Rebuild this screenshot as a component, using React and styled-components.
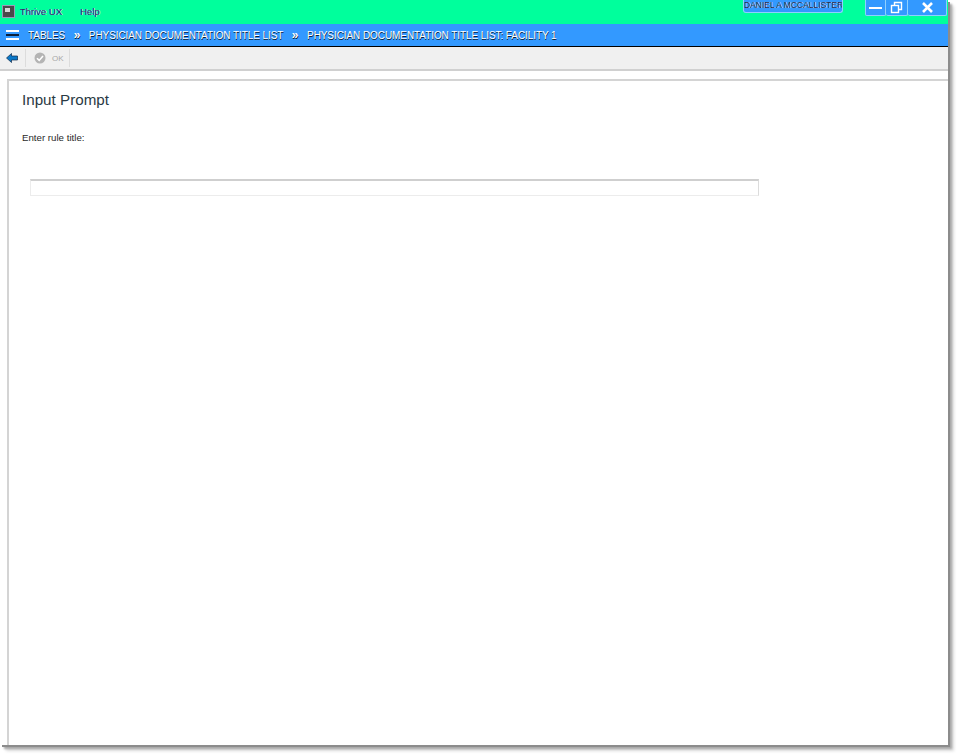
import React from "react";
import styled, { createGlobalStyle } from "styled-components";

const Global = createGlobalStyle`
    html, body { margin: 0; padding: 0; background: #fff; }
    body { width: 957px; height: 755px; overflow: hidden; font-family: "Liberation Sans", Arial, sans-serif; }
`

const Window = styled.div`
    width: 948px;
    height: 745px;
    background: #fff;
    display: flex;
    flex-direction: column;
    box-shadow: 2px 2px 0 #8c8c8c, 4px 4px 2px #a8a8a8, 6px 6px 3px #dcdcdc;
`

const TitleBar = styled.div`
    height: 24px;
    background: #00ff9c;
    display: flex;
    align-items: flex-start;
    padding-left: 2px;
`

const AppIcon = styled.div`
    width: 11px;
    height: 11px;
    margin-top: 5px;
    background: #4a4a4a;
    border: 1px solid #9a9ab8;
    display: flex;
    align-items: center;
    justify-content: center;
`

const AppIconMark = styled.span`
    width: 5px;
    height: 4px;
    margin: 0 2px 3px 0;
    background: #d8d8d8;
`

const MenuItem = styled.span`
    font-size: 9.5px;
    line-height: 12px;
    margin-top: 6px;
    margin-left: ${props => props.$left}px;
    color: #14285a;
    text-shadow: 0.5px 0 0 #fff, -0.5px 0 0 #3399ff;
`

const UserName = styled.div`
    margin-left: auto;
    width: 100px;
    height: 13px;
    box-sizing: border-box;
    border: 1px solid #8fd0ff;
    border-top: 0;
    border-radius: 0 0 3px 3px;
    background: #3399ff;
    color: #10204a;
    font-size: 8.5px;
    line-height: 11px;
    text-align: center;
    white-space: nowrap;
    overflow: hidden;
    text-shadow: 0.5px 0 0 #fff;
`

const WindowButtons = styled.div`
    margin-left: 22px;
    margin-right: 1px;
    display: flex;
`

const WindowButton = styled.div`
    width: ${props => props.$width}px;
    height: 16px;
    box-sizing: border-box;
    background: #3399ff;
    border: 1px solid #8fd0ff;
    border-top: 0;
    border-left-width: ${props => props.$first ? 1 : 0}px;
    border-radius: 0 0 2px 2px;
    display: flex;
    align-items: center;
    justify-content: center;
`

const NavBar = styled.div`
    height: 22px;
    background: #3399ff;
    border-bottom: 1px solid #000;
    display: flex;
    align-items: center;
    padding-left: 6px;
    color: #fff;
    font-size: 10px;
    white-space: nowrap;
`

const Burger = styled.svg`
    width: 13px;
    height: 11px;
    margin-right: 9px;
`

const Crumb = styled.span`
    color: #fff;
    letter-spacing: -0.08px;
    text-shadow: 0.5px 0.5px 0 #0b1f3a;
`

const Chevrons = styled.span`
    margin: 0 8.5px;
    color: #fff;
    font-size: 12px;
    font-weight: 700;
    text-shadow: 0.5px 0.5px 0 #0b1f3a;
`

const Toolbar = styled.div`
    height: 22px;
    background: #f0f0f0;
    border-bottom: 2px solid #d0d0d0;
    display: flex;
    align-items: stretch;
`

const ToolCell = styled.div`
    display: flex;
    align-items: center;
    gap: 6px;
    padding: ${props => props.$padding};
    border-right: 1px solid #dcdcdc;
    margin: 2px 0;
`

const OkLabel = styled.span`
    font-size: 8px;
    color: #a8a8a8;
`

const Panel = styled.div`
    flex: 1;
    margin: 8px 0 0 7px;
    border-top: 2px solid #d4d4d4;
    border-left: 2px solid #d4d4d4;
    padding: 9px 13px 0;
    display: flex;
    flex-direction: column;
    align-items: flex-start;
`

const Heading = styled.h1`
    margin: 0;
    font-size: 15.2px;
    line-height: 19px;
    font-weight: 400;
    color: #2a3a44;
`

const Prompt = styled.label`
    margin-top: 23px;
    font-size: 9.7px;
    line-height: 12px;
    color: #2a2a2a;
`

const RuleInput = styled.input`
    display: block;
    margin: 35px 0 0 8px;
    width: 729px;
    height: 17px;
    box-sizing: border-box;
    background: #fff;
    border: 1px solid #ececec;
    border-top: 2px solid #cfcfcf;
    border-right-color: #dcdcdc;
    outline: none;
    padding: 0 4px;
`

export default function App () {
    return (
    <>
        <Global />
        <Window>
            <TitleBar>
                <AppIcon><AppIconMark /></AppIcon>
                <MenuItem $left={5}>Thrive UX</MenuItem>
                <MenuItem $left={18}>Help</MenuItem>
                <UserName>DANIEL A MCCALLISTER</UserName>
                <WindowButtons>
                    <WindowButton $width={21} $first>
                        <svg width="14" height="6" viewBox="0 0 14 6"><rect x="0" y="2" width="13" height="2" fill="#fff" /></svg>
                    </WindowButton>
                    <WindowButton $width={22}>
                        <svg width="13" height="13" viewBox="0 0 13 13" fill="none" stroke="#fff" strokeWidth="1.4">
                            <rect x="1.5" y="4.5" width="7" height="7" />
                            <path d="M4.5 4V1.5H11.5V8.5H9" />
                        </svg>
                    </WindowButton>
                    <WindowButton $width={39}>
                        <svg width="11" height="11" viewBox="0 0 11 11" stroke="#fff" strokeWidth="2.6"><path d="M1 1L10 10M10 1L1 10" /></svg>
                    </WindowButton>
                </WindowButtons>
            </TitleBar>
            <NavBar>
                <Burger viewBox="0 0 13 11">
                    <rect x="0" y="0" width="13" height="2" fill="#fff" />
                    <rect x="0" y="4" width="13" height="2" fill="#0b1f3a" />
                    <rect x="0" y="8" width="13" height="2" fill="#fff" />
                </Burger>
                <Crumb>TABLES</Crumb>
                <Chevrons>»</Chevrons>
                <Crumb>PHYSICIAN DOCUMENTATION TITLE LIST</Crumb>
                <Chevrons>»</Chevrons>
                <Crumb>PHYSICIAN DOCUMENTATION TITLE LIST: FACILITY 1</Crumb>
            </NavBar>
            <Toolbar>
                <ToolCell $padding="0 7px 0 6px">
                    <svg width="12" height="10" viewBox="0 0 12 10">
                        <path d="M0.5 5L5.5 0.5V3H11.5V7H5.5V9.5Z" fill="#0a78c8" stroke="#0b2a4a" strokeWidth="0.7" />
                    </svg>
                </ToolCell>
                <ToolCell $padding="0 5px 0 8px">
                    <svg width="12" height="12" viewBox="0 0 12 12">
                        <circle cx="6" cy="6" r="5.5" fill="#b4b4b4" />
                        <path d="M3 6.2L5.2 8.4L9 4" fill="none" stroke="#fff" strokeWidth="1.6" />
                    </svg>
                    <OkLabel>OK</OkLabel>
                </ToolCell>
            </Toolbar>
            <Panel>
                <Heading>Input Prompt</Heading>
                <Prompt htmlFor="rule-title">Enter rule title:</Prompt>
                <RuleInput id="rule-title" type="text" />
            </Panel>
        </Window>
    </>
    )
}
